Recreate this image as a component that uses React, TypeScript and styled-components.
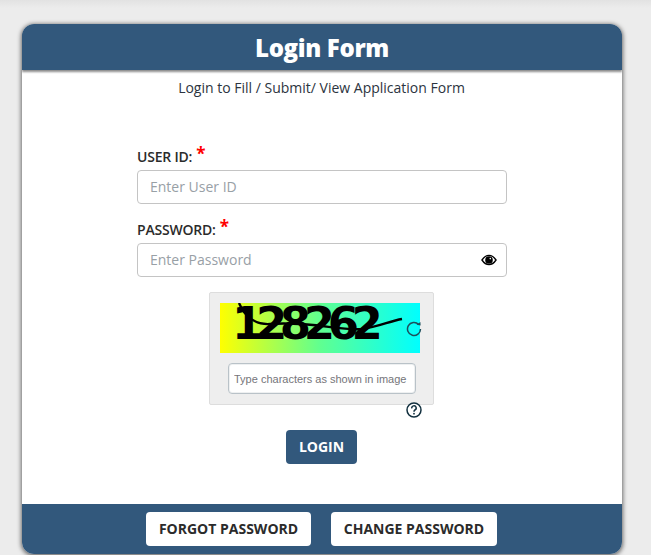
import React from "react";
import styled, { createGlobalStyle } from "styled-components";

const Global = createGlobalStyle`
  html, body { margin: 0; padding: 0; height: 100%; overflow: hidden; }
  body { background: #ececec; font-family: "Open Sans", "Liberation Sans", sans-serif; color: #212529; }
  * { box-sizing: border-box; }
`;

const Page = styled.div`
  height: 555px;
  padding: 24px 29px 0 22px;
  background: linear-gradient(#e2e2e2 0, #ececec 8px);
`;

const Card = styled.main`
  width: 600px;
  height: 530px;
  background: #fff;
  border-radius: 12px;
  box-shadow: 0 1px 4px 1px rgba(0, 0, 0, 0.55);
  display: flex;
  flex-direction: column;
  overflow: hidden;
`;

const Header = styled.h1`
  margin: 0;
  height: 46px;
  flex: none;
  background: #32587c;
  color: #fff;
  font-size: 24px;
  font-weight: 800;
  line-height: 48px;
  letter-spacing: -0.35px;
  text-align: center;
  box-shadow: 0 2px 2px rgba(0, 0, 0, 0.45);
`;

const Sub = styled.p`
  margin: 8px 0 0;
  height: 20px;
  font-size: 14px;
  line-height: 20px;
  text-align: center;
  color: #2c3440;
  padding-right: 1px;
`;

const Form = styled.form`
  width: 370px;
  margin: 46px 0 0 115px;
  display: flex;
  flex-direction: column;
  flex: 1;
`;

const Label = styled.label`
  display: block;
  height: 26px;
  font-size: 14px;
  font-weight: 600;
  line-height: 26px;
  letter-spacing: -0.2px;
  color: #2b2b2b;
`;

const Star = styled.span`
  color: #f00;
  font-size: 17px;
  font-weight: 700;
  line-height: 14px;
  margin-left: 4px;
  position: relative;
  top: -2px;
`;

const Field = styled.div`
  position: relative;
  height: 34px;
  margin-bottom: 13px;
`;

const Input = styled.input`
  width: 100%;
  height: 100%;
  border: 1px solid #c4c4c4;
  border-radius: 4px;
  padding: 0 12px 2px;
  font-family: inherit;
  font-size: 14px;
  background: #fff;
  outline: none;
  &::placeholder { color: #98a0a6; opacity: 1; }
`;

const EyeIcon = styled.svg`
  position: absolute;
  right: 10px;
  top: 10px;
`;

const CaptchaBox = styled.div`
  position: relative;
  align-self: flex-start;
  width: 225px;
  height: 113px;
  margin: 2px 0 0 72px;
  padding: 10px 0 0 10px;
  background: #eee;
  border: 1px solid #ddd;
  border-radius: 2px;
`;

const CaptchaImage = styled.div`
  position: relative;
  width: 200px;
  height: 50px;
  background: linear-gradient(90deg, #ffff00 0%, #60ff90 50%, #00ffff 100%);
`;

const CaptchaText = styled.span`
  position: absolute;
  left: 12px;
  top: 1px;
  font-family: "DejaVu Sans", sans-serif;
  font-size: 45px;
  font-weight: 700;
  line-height: 40px;
  letter-spacing: -7.4px;
  color: #000;
  white-space: nowrap;
`;

const CaptchaLine = styled.svg`
  position: absolute;
  left: 0;
  top: 0;
`;

const Refresh = styled.svg`
  position: absolute;
  left: 196px;
  top: 28px;
`;

const CaptchaInput = styled.input`
  display: block;
  width: 188px;
  height: 31px;
  margin: 10px 0 0 8px;
  border: 1px solid #b9c2c8;
  border-radius: 4px;
  padding: 0 5px;
  background: #fff;
  box-shadow: inset 0 0 0 1px #eef0f1;
  font-family: "Liberation Sans", Arial, sans-serif;
  font-size: 11px;
  outline: none;
  &::placeholder { color: #75757a; opacity: 1; }
`;

const Help = styled.svg`
  position: absolute;
  left: 196px;
  top: 109px;
`;

const LoginBtn = styled.button`
  align-self: center;
  width: 71px;
  height: 34px;
  margin-top: 25px;
  margin-left: -1px;
  border: none;
  border-radius: 4px;
  background: #32587c;
  color: #fff;
  font-family: inherit;
  font-size: 14px;
  font-weight: 700;
  padding: 0 0 1px;
`;

const Footer = styled.footer`
  height: 50px;
  flex: none;
  background: #32587c;
  display: flex;
  align-items: flex-start;
  gap: 20px;
  padding: 8px 0 0 124px;
`;

const FootBtn = styled.button<{ $w: number }>`
  width: ${(p) => p.$w}px;
  height: 34px;
  border: none;
  border-radius: 4px;
  background: #fff;
  color: #2b2b2b;
  font-family: inherit;
  font-size: 14px;
  font-weight: 700;
  padding: 0 0 2px;
`;

export default function App() {
  return (
    <Page>
      <Global />
      <Card>
        <Header>Login Form</Header>
        <Sub>Login to Fill / Submit/ View Application Form</Sub>
        <Form onSubmit={(e) => e.preventDefault()}>
          <Label>USER ID:<Star>*</Star></Label>
          <Field>
            <Input placeholder="Enter User ID" />
          </Field>
          <Label>PASSWORD:<Star>*</Star></Label>
          <Field>
            <Input placeholder="Enter Password" />
            <EyeIcon width="16" height="14" viewBox="0 0 16 14">
              <path d="M1 7 C3 4 5.2 2.4 8 2.4 C10.8 2.4 13 4 15 7 C13 10 10.8 11.6 8 11.6 C5.2 11.6 3 10 1 7 Z" fill="#fff" stroke="#000" strokeWidth="1.4" />
              <circle cx="8" cy="7" r="3.8" fill="#000" />
              <circle cx="9.3" cy="5.6" r="0.8" fill="#fff" />
            </EyeIcon>
          </Field>
          <CaptchaBox>
            <CaptchaImage>
              <CaptchaText>128262</CaptchaText>
              <CaptchaLine width="200" height="50" viewBox="0 0 200 50">
                <path d="M19 0 C 24 12, 34 22, 50 21 C 90 18, 120 28, 142 26 C 158 24, 170 18, 182 16" fill="none" stroke="#000" strokeWidth="2.4" />
              </CaptchaLine>
            </CaptchaImage>
            <Refresh width="16" height="16" viewBox="0 0 16 16">
              <path d="M12.6 3.4 A6.5 6.5 0 1 0 14.5 8" fill="none" stroke="#1d4f5c" strokeWidth="1.5" />
              <path d="M10.5 3.8 L14.6 4.6 L14.4 1 Z" fill="#1d4f5c" />
            </Refresh>
            <CaptchaInput placeholder="Type characters as shown in image" />
            <Help width="16" height="16" viewBox="0 0 16 16">
              <circle cx="8" cy="8" r="7" fill="#fff" stroke="#12303f" strokeWidth="1.5" />
              <path d="M5.8 6.3 A2.2 2.2 0 1 1 8.9 8 C8.2 8.4 8 8.7 8 9.7" fill="none" stroke="#12303f" strokeWidth="1.5" />
              <circle cx="8" cy="11.7" r="0.9" fill="#12303f" />
            </Help>
          </CaptchaBox>
          <LoginBtn>LOGIN</LoginBtn>
        </Form>
        <Footer>
          <FootBtn $w={165}>FORGOT PASSWORD</FootBtn>
          <FootBtn $w={166}>CHANGE PASSWORD</FootBtn>
        </Footer>
      </Card>
    </Page>
  );
}
